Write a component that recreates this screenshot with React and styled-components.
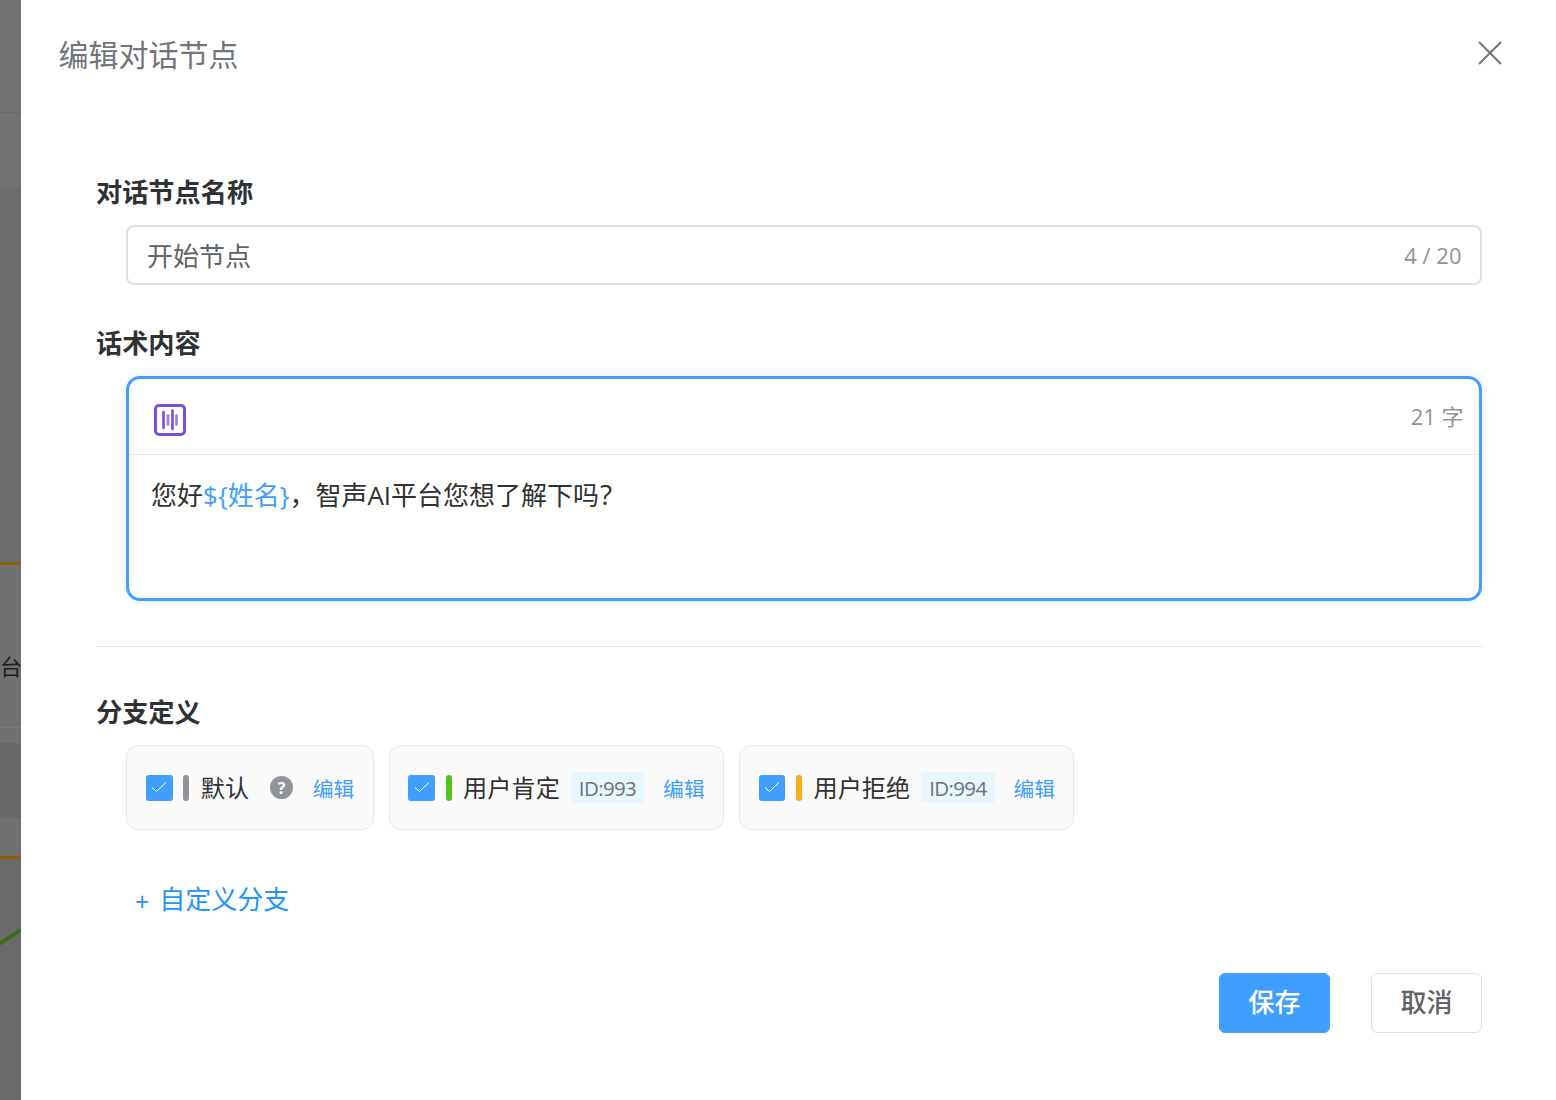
import React from "react";
import styled, { createGlobalStyle } from "styled-components";

const FONT = `"Open Sans", "Noto Sans CJK SC", sans-serif`;

const Global = createGlobalStyle`
  html, body { margin: 0; padding: 0; background: #fff; }
  * { box-sizing: border-box; }
  body { font-family: ${FONT}; overflow: hidden; }
`;

const Page = styled.div`
  display: flex;
  width: 1556px;
  height: 1100px;
  overflow: hidden;
`;

const Backdrop = styled.div`
  width: 21px;
  flex: none;
  display: flex;
  flex-direction: column;
  background: #6f6f6f;
`;

const Band = styled.div`
  height: ${p => p.$h}px;
  flex: none;
  background: ${p => p.$bg || "transparent"};
  border-bottom: ${p => p.$line ? `1px solid ${p.$line}` : "none"};
  display: flex;
  align-items: center;
`;

const BackGlyph = styled.span`
  font-size: 22px;
  line-height: 1;
  color: #1f1f1f;
  white-space: nowrap;
`;

const TraceLine = styled.svg`
  display: block;
  width: 21px;
  height: 241px;
`;

const Drawer = styled.div`
  flex: 1;
  display: flex;
  flex-direction: column;
  background: #fff;
`;

const Header = styled.div`
  height: 110px;
  flex: none;
  display: flex;
  justify-content: space-between;
  align-items: flex-start;
  padding: 33px 53px 0 37.5px;
`;

const Title = styled.div`
  font-size: 30px;
  line-height: 43px;
  color: #72767b;
`;

const CloseIcon = styled.svg`
  display: block;
  width: 26px;
  height: 26px;
  margin-top: 7px;
`;

const Body = styled.div`
  padding: 0 74px 0 75px;
  display: flex;
  flex-direction: column;
`;

const Label = styled.div`
  font-size: 26.2px;
  font-weight: 700;
  line-height: 36px;
  color: #303133;
  margin-top: ${p => p.$top}px;
`;

const Field = styled.div`
  margin: ${p => p.$top}px 0.5px 0 30px;
`;

const NameInput = styled(Field)`
  height: 60px;
  display: flex;
  align-items: center;
  justify-content: space-between;
  border: 2px solid #dcdfe6;
  border-radius: 8px;
  padding: 0 18px 0 19px;
`;

const InputText = styled.span`
  font-size: 26px;
  color: #606266;
`;

const Counter = styled.span`
  font-size: 22px;
  color: #909399;
`;

const Editor = styled(Field)`
  height: 225px;
  border: 3px solid #409eff;
  border-radius: 14px;
  box-shadow: 0 0 8px rgba(64, 158, 255, 0.14);
  display: flex;
  flex-direction: column;
`;

const EditorBar = styled.div`
  height: 76px;
  flex: none;
  border-bottom: 1px solid #e8e8e8;
  display: flex;
  justify-content: space-between;
  padding: 25px 15px 0 25px;
`;

const VoiceIcon = styled.svg`
  display: block;
  width: 32px;
  height: 32px;
`;

const WordCount = styled(Counter)`
  line-height: 26px;
  margin-top: -1px;
`;

const EditorText = styled.div`
  padding: 20px 22px;
  font-size: 26px;
  line-height: 40px;
  color: #303133;
`;

const Variable = styled.span`
  color: #409eff;
`;

const Question = styled.span`
  font-size: 28px;
  line-height: 1;
  margin-left: 1px;
`;

const Divider = styled.div`
  height: 1px;
  background: #e4e7ed;
  margin-top: 45px;
`;

const Branches = styled.div`
  display: flex;
  gap: 15px;
  margin: 15px 0 0 30px;
`;

const Branch = styled.div`
  height: 85px;
  display: flex;
  align-items: center;
  padding: 0 ${p => p.$pr}px 0 ${p => p.$pl}px;
  background: #fafafa;
  border: 1px solid #e8e8e8;
  border-radius: 12px;
`;

const Check = styled.span`
  width: 26.5px;
  height: 26px;
  flex: none;
  border-radius: 3px;
  background: #409eff;
  display: flex;
  align-items: center;
  justify-content: center;
  margin-right: 10.8px;
`;

const TickMark = styled.svg`
  display: block;
  width: 16px;
  height: 12px;
  margin-bottom: 2px;
`;

const Bar = styled.span`
  width: 6px;
  height: 26px;
  flex: none;
  border-radius: 3px;
  background: ${p => p.$color};
  margin-right: 11.5px;
`;

const BranchName = styled.span`
  font-size: 24.2px;
  line-height: 32px;
  margin-top: 1px;
  color: #303133;
  white-space: nowrap;
`;

const IdTag = styled.span`
  height: 31px;
  display: flex;
  align-items: center;
  margin-left: 11px;
  padding: 0 8px;
  background: #e8f6ff;
  border-radius: 4px;
  font-size: 20.5px;
  letter-spacing: -0.65px;
  color: #6e7278;
`;

const Help = styled.span`
  width: 23px;
  height: 23px;
  flex: none;
  margin-left: 21px;
  border-radius: 50%;
  background: #909399;
  color: #fff;
  font-size: 16px;
  font-weight: 700;
  display: flex;
  align-items: center;
  justify-content: center;
`;

const EditLink = styled.span`
  margin-left: ${p => p.$ml}px;
  margin-top: 3px;
  font-size: 20.8px;
  line-height: 28px;
  color: #409eff;
  white-space: nowrap;
`;

const AddBranch = styled.div`
  height: 40px;
  display: flex;
  align-items: center;
  margin: 49px 0 0 39px;
  font-size: 26px;
  line-height: 40px;
  color: #1f93ff;
`;

const Plus = styled.span`
  font-size: 25px;
  font-weight: 500;
  line-height: 32px;
  margin: 4px 10px 0 0;
`;

const Footer = styled.div`
  display: flex;
  justify-content: flex-end;
  gap: 41px;
  margin-top: 54px;
`;

const Button = styled.button`
  width: 111px;
  height: 60px;
  padding: 0 0 4px;
  font-family: ${FONT};
  font-size: 26px;
  font-weight: 500;
  border-radius: 6px;
  border: 1px solid ${p => p.$primary ? "#409eff" : "#dcdfe6"};
  background: ${p => p.$primary ? "#409eff" : "#fff"};
  color: ${p => p.$primary ? "#fff" : "#606266"};
`;

const Tick = () => (
  <TickMark viewBox="0 0 16 12" fill="none">
    <path d="M1 6.5 L5.5 10.5 L15 1.5" stroke="#fff" strokeWidth="1" />
  </TickMark>
);

const branches = [
  { name: "默认", color: "#909399", pl: 19, pr: 19, help: true },
  { name: "用户肯定", color: "#52c41a", pl: 18, pr: 18, id: "ID:993" },
  { name: "用户拒绝", color: "#faad14", pl: 19, pr: 18, id: "ID:994" },
];

export default function App() {
  return (
    <Page>
      <Global />
      <Backdrop>
        <Band $h={113} $bg="#717171" $line="#696969" />
        <Band $h={74} $bg="#727272" />
        <Band $h={375} $bg="#6c6c6c" />
        <Band $h={3} $bg="#8c5e0a" />
        <Band $h={89} $bg="#707070" />
        <Band $h={24} $bg="#707070"><BackGlyph>台</BackGlyph></Band>
        <Band $h={50} $bg="#707070" $line="#777b7c" />
        <Band $h={15} $bg="#707070" />
        <Band $h={75} $bg="#696969" />
        <Band $h={38} $bg="#707070" />
        <Band $h={3} $bg="#8c5e0a" />
        <Band $h={241} $bg="#6a6a6a">
          <TraceLine viewBox="0 0 21 241" fill="none">
            <path d="M-1 85 L21 71" stroke="#35700f" strokeWidth="3.5" />
          </TraceLine>
        </Band>
      </Backdrop>
      <Drawer>
        <Header>
          <Title>编辑对话节点</Title>
          <CloseIcon viewBox="0 0 26 26" fill="none">
            <path d="M2 2 L24 24 M24 2 L2 24" stroke="#72767b" strokeWidth="2" />
          </CloseIcon>
        </Header>
        <Body>
          <Label $top={64}>对话节点名称</Label>
          <NameInput $top={15}>
            <InputText>开始节点</InputText>
            <Counter>4 / 20</Counter>
          </NameInput>
          <Label $top={40}>话术内容</Label>
          <Editor $top={15}>
            <EditorBar>
              <VoiceIcon viewBox="0 0 32 32" fill="none">
                <rect x="1.5" y="1.5" width="29" height="29" rx="3.5" stroke="#7a4fd6" strokeWidth="3" />
                <path d="M9.5 8 V24 M18.5 6.5 V25" stroke="#7a4fd6" strokeWidth="2.6" strokeLinecap="round" />
                <path d="M14 11.5 V20.5 M22.5 11.5 V20.5" stroke="#9a78e2" strokeWidth="2.6" strokeLinecap="round" />
              </VoiceIcon>
              <WordCount>21 字</WordCount>
            </EditorBar>
            <EditorText>
              您好<Variable>{"${姓名}"}</Variable>，智声AI平台您想了解下吗<Question>?</Question>
            </EditorText>
          </Editor>
          <Divider />
          <Label $top={47}>分支定义</Label>
          <Branches>
            {branches.map(b => (
              <Branch key={b.name} $pl={b.pl} $pr={b.pr}>
                <Check><Tick /></Check>
                <Bar $color={b.color} />
                <BranchName>{b.name}</BranchName>
                {b.help && <Help>?</Help>}
                {b.id && <IdTag>{b.id}</IdTag>}
                <EditLink $ml={b.help ? 19.5 : 19}>编辑</EditLink>
              </Branch>
            ))}
          </Branches>
          <AddBranch><Plus>+</Plus>自定义分支</AddBranch>
          <Footer>
            <Button $primary>保存</Button>
            <Button>取消</Button>
          </Footer>
        </Body>
      </Drawer>
    </Page>
  );
}
